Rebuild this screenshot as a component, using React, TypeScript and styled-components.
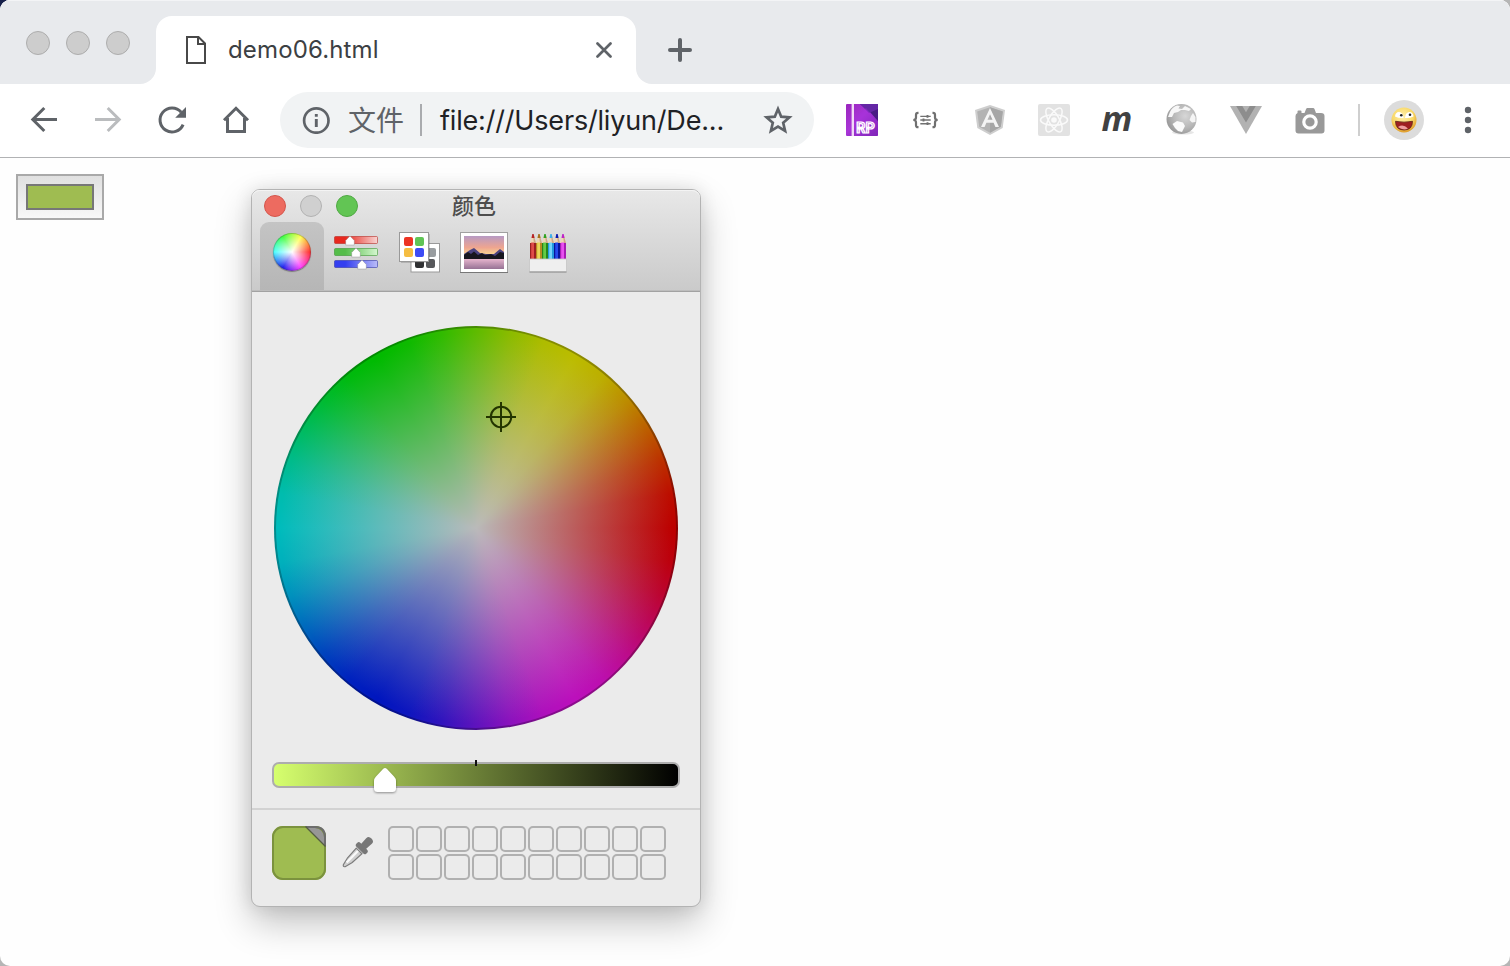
import React from "react";
import styled, { createGlobalStyle } from "styled-components";

const GlobalStyle = createGlobalStyle`
  * { box-sizing: border-box; }
  html, body { margin: 0; padding: 0; }
  body {
    width: 1510px;
    height: 966px;
    overflow: hidden;
    background: linear-gradient(90deg, #17204a 0 40px, #b5b5b5 40px) top / 100% 40px no-repeat #b5b5b5;
    font-family: Inter, "Noto Sans CJK SC", sans-serif;
  }
  svg { display: block; flex: none; }
`;

const BrowserWindow = styled.div`
  position: relative;
  display: flex;
  flex-direction: column;
  width: 1510px;
  height: 966px;
  border-radius: 10px;
  overflow: hidden;
  background: #fefefe;
`;

/* ---------- tab strip ---------- */

const TabStrip = styled.header`
  display: flex;
  height: 84px;
  flex: none;
  background: #fff;
`;

const StripLeft = styled.div`
  display: flex;
  align-items: center;
  gap: 16px;
  width: 156px;
  padding: 0 0 0 26px;
  background: #e8eaed;
  border-top: 1px solid #f3f4f6;
  border-bottom: 0;
  border-bottom-right-radius: 16px;
`;

const StripRight = styled.div`
  flex: 1;
  display: flex;
  align-items: center;
  padding: 14px 0 0 32px;
  background: #e8eaed;
  border-top: 1px solid #f3f4f6;
  border-bottom-left-radius: 16px;
`;

const TabHolder = styled.div`
  width: 480px;
  padding-top: 15px;
  background: #e8eaed;
  border-top: 1px solid #f3f4f6;
`;

const Tab = styled.div`
  display: flex;
  align-items: center;
  height: 68px;
  padding: 0 24px 0 29px;
  background: #fff;
  border-radius: 16px 16px 0 0;
`;

const TabTitle = styled.span`
  flex: 1;
  margin-left: 21px;
  font-size: 24px;
  line-height: 30px;
  letter-spacing: 0.15px;
  color: #3c4043;
`;

const Light = styled.span<{ $size: number; $fill: string; $edge: string }>`
  width: ${(p) => p.$size}px;
  height: ${(p) => p.$size}px;
  border-radius: 50%;
  background: ${(p) => p.$fill};
  border: 1px solid ${(p) => p.$edge};
`;

/* ---------- toolbar ---------- */

const Toolbar = styled.nav`
  display: flex;
  align-items: center;
  flex: none;
  height: 74px;
  padding: 0 0 1px 12px;
  background: #fff;
  border-bottom: 1px solid #b1b2b4;
`;

const Slot = styled.div`
  display: flex;
  align-items: center;
  justify-content: center;
  width: 64px;
  height: 64px;
  flex: none;
`;

const AddressBar = styled.div`
  display: flex;
  align-items: center;
  width: 534px;
  height: 56px;
  margin: 0 16px 0 12px;
  padding: 0 20px 0 22px;
  border-radius: 28px;
  background: #f1f3f4;
`;

const Scheme = styled.span`
  margin-left: 18px;
  padding-bottom: 2px;
  font: 28px/38px "Noto Sans CJK SC", sans-serif;
  color: #5f6368;
`;

const Divider = styled.span<{ $color: string }>`
  width: 2px;
  height: 32px;
  margin-left: 16px;
  background: ${(p) => p.$color};
`;

const Url = styled.span`
  flex: 1;
  margin-left: 18px;
  padding-top: 2px;
  font-size: 27px;
  line-height: 36px;
  letter-spacing: -0.18px;
  white-space: nowrap;
  color: #202124;
`;

const Avatar = styled.div`
  display: flex;
  align-items: center;
  justify-content: center;
  width: 40px;
  height: 40px;
  margin: 0 12px 0 24px;
  border-radius: 50%;
  background: #dcdcdc;
`;

const Markdown = styled.span`
  padding: 0 2px 5px 0;
  font: italic 700 34px/40px "Open Sans", sans-serif;
  color: #414141;
`;

/* ---------- page ---------- */

const Page = styled.main`
  flex: 1;
  padding: 16px;
`;

const ColorInput = styled.div`
  width: 88px;
  height: 46px;
  padding: 8px;
  border: 2px solid #a9a9a9;
  background: linear-gradient(#e0e0e0, #f8f8f8);
`;

const ColorValue = styled.div`
  height: 26px;
  border: 2px solid #777;
  background: #9fbc51;
`;

/* ---------- colour panel ---------- */

const Panel = styled.section`
  position: absolute;
  left: 251px;
  top: 189px;
  width: 450px;
  height: 718px;
  border: 1px solid #b3b3b3;
  border-radius: 9px;
  background: #ebebeb;
  background-clip: padding-box;
  box-shadow: 0 16px 36px rgba(0, 0, 0, 0.24), 0 0 18px rgba(0, 0, 0, 0.1);
`;

const PanelHeader = styled.div`
  height: 102px;
  border-radius: 8px 8px 0 0;
  border-bottom: 1px solid #a2a2a2;
  background: linear-gradient(#e8e8e8, #cacaca);
  box-shadow: inset 0 1px #f4f4f4, inset 0 -1px #bdbdbd;
`;

const PanelTitleBar = styled.div`
  display: grid;
  grid-template-columns: 188px 1fr 188px;
  height: 32px;
  align-items: center;
  padding-left: 12px;
`;

const PanelLights = styled.div`
  display: flex;
  gap: 14px;
`;

const PanelTitle = styled.h1`
  margin: 0;
  padding-bottom: 4px;
  font: 500 22px/28px "Noto Sans CJK SC", sans-serif;
  color: #4d4d4d;
`;

const ModeTabs = styled.div`
  display: flex;
  padding-left: 8px;
`;

const ModeTab = styled.div<{ $active?: boolean }>`
  display: flex;
  justify-content: center;
  width: 64px;
  height: 68px;
  padding-top: 6px;
  border-radius: 9px 9px 0 0;
  background: ${(p) => (p.$active ? "linear-gradient(#c4c4c4, #b6b6b6)" : "none")};
`;

const MiniWheel = styled.div`
  width: 38px;
  height: 38px;
  margin-top: 5px;
  border-radius: 50%;
  border: 1px solid rgba(70, 70, 70, 0.3);
  background:
    radial-gradient(circle closest-side, #fff 0%, rgba(255, 255, 255, 0) 100%),
    conic-gradient(from 90deg, #f22, #f3f, #11e, #4ff, #3f3, #ff4, #f22);
  background-origin: border-box;
  box-shadow: 0 1px 1px rgba(0, 0, 0, 0.35);
`;

const WheelArea = styled.div`
  padding: 34px 22px 0;
`;

/* Hues clockwise from the right-hand side, eased so that each one spreads around its own axis. */
const HUES = [
  [188, 0, 0],
  [188, 16, 188],
  [0, 22, 190],
  [0, 188, 188],
  [0, 186, 0],
  [188, 188, 0],
  [188, 0, 0],
];

const hueStops = HUES.slice(0, -1)
  .flatMap((from, i) =>
    [0, 10, 20, 30, 40, 50].map((deg) => {
      const t = deg / 60;
      const eased = t * t * (3 - 2 * t);
      const rgb = from.map((c, k) => Math.round(c + (HUES[i + 1][k] - c) * eased));
      return `rgb(${rgb.join(",")}) ${i * 60 + deg}deg`;
    })
  )
  .join(", ");

const Wheel = styled.div`
  position: relative;
  width: 404px;
  height: 404px;
  border-radius: 50%;
  border: 2px solid rgba(0, 0, 0, 0.25);
  background:
    radial-gradient(circle closest-side, #bababa 0%, rgba(186, 186, 186, 0) 97%),
    conic-gradient(from 90deg, ${hueStops}, rgb(188, 0, 0) 360deg);
  background-origin: border-box;
`;

const Crosshair = styled.svg`
  position: absolute;
  left: 210px;
  top: 74px;
`;

const Slider = styled.div`
  position: relative;
  width: 408px;
  height: 26px;
  margin: 32px 0 0 20px;
  border: 2px solid #adadad;
  border-radius: 7px;
  background: linear-gradient(90deg, #d6ff6e, #000);
`;

const Tick = styled.span`
  position: absolute;
  left: 201px;
  top: -4px;
  width: 2px;
  height: 6px;
  background: #111;
`;

const Thumb = styled.svg`
  position: absolute;
  left: 98px;
  top: 2px;
  filter: drop-shadow(0 1px 1px rgba(0, 0, 0, 0.4));
`;

const PanelFooter = styled.div`
  display: flex;
  margin-top: 20px;
  padding: 16px 20px 0;
  border-top: 2px solid #d2d2d2;
`;

const Dropper = styled.div`
  margin: 10px 14px 0 14px;
`;

const SavedColors = styled.div`
  display: grid;
  grid-template-columns: repeat(10, 26px);
  grid-auto-rows: 26px;
  gap: 2px;
`;

const SavedCell = styled.span`
  border: 2px solid #b0b0b0;
  border-radius: 5px;
`;

const GREY = "#5f6368";

const BackArrow = ({ color = GREY, flip = false }: { color?: string; flip?: boolean }) => (
  <svg width="30" height="30" viewBox="0 0 30 30" fill="none" stroke={color} strokeWidth="3" transform={flip ? "scale(-1,1)" : undefined}>
    <path d="M28 14.5H4M15.300 3L3.800 14.500L15.300 26" />
  </svg>
);

const Reload = () => (
  <svg width="32" height="32" viewBox="0 0 32 32">
    <path d="M27.1 20.6A12 12 0 1 1 25.2 8.2" fill="none" stroke={GREY} strokeWidth="3" />
    <path d="M30 3V13.7H19.2Z" fill={GREY} />
  </svg>
);

const Home = () => (
  <svg width="30" height="30" viewBox="0 0 30 30" fill="none" stroke={GREY} strokeWidth="3">
    <path d="M3 15.3L15 3.3L27 15.3" />
    <path d="M6.5 13V26.5H23.5V13" />
  </svg>
);

const Angular = () => (
  <svg width="32" height="32" viewBox="0 0 32 32">
    <path d="M16 1L31 6L28.7 24L16 31L3.3 24L1 6Z" fill="#cecece" />
    <path d="M16 3.3L28.8 7.5L26.8 22.8L16 28.8L5.2 22.8L3.2 7.5Z" fill="#b3b3b3" />
    <path d="M16 3.3L28.8 7.5L26.8 22.8L16 28.8Z" fill="#a6a6a6" />
    <path d="M16 4L7 23H10.6L12.4 18.7H19.6L21.4 23H25ZM16 10.2L18.5 15.8H13.5Z" fill="#f4f4f4" fillRule="evenodd" />
  </svg>
);

const ReactLogo = () => (
  <svg width="32" height="32" viewBox="0 0 32 32">
    <rect width="32" height="32" rx="2" fill="#e2e2e2" />
    <g fill="none" stroke="#fafafa" strokeWidth="1.5">
      <ellipse cx="16" cy="16" rx="13.5" ry="5.2" />
      <ellipse cx="16" cy="16" rx="13.5" ry="5.2" transform="rotate(60 16 16)" />
      <ellipse cx="16" cy="16" rx="13.5" ry="5.2" transform="rotate(120 16 16)" />
    </g>
    <circle cx="16" cy="16" r="2.8" fill="#fafafa" />
  </svg>
);

const AxureRP = () => (
  <svg width="32" height="32" viewBox="0 0 32 32">
    <defs>
      <linearGradient id="rp" x1="0" y1="0" x2="1" y2="1">
        <stop offset="0" stopColor="#9a25bd" />
        <stop offset="0.45" stopColor="#a935d8" />
        <stop offset="1" stopColor="#65209f" />
      </linearGradient>
    </defs>
    <rect width="32" height="32" rx="1" fill="url(#rp)" />
    <path d="M14 0H32V17L24 8Z" fill="#481c84" />
    <path d="M14 0L23 9L32 5V0Z" fill="#6427a5" />
    <path d="M9 13L20 4L32 18V32H9Z" fill="#a52fdc" opacity="0.4" />
    <rect x="5.600" width="2.400" height="32" fill="#f1d9f6" />
    <text x="10.2" y="28.5" fontFamily="Roboto" fontWeight="700" fontSize="14" textLength="18.5" lengthAdjust="spacingAndGlyphs" fill="#c475e2" stroke="#fff" strokeWidth="1.2">RP</text>
  </svg>
);

const BracesIcon = () => (
  <svg width="28" height="18" viewBox="0 0 28 18" fill="none" stroke="#707070" strokeWidth="2.200">
    <path d="M6.5 1.800H6Q4 1.800 4 3.800V6.500Q4 9 1.300 9Q4 9 4 11.500V14.200Q4 16.200 6 16.200H6.500" />
    <path d="M20.500 1.800H21Q23 1.800 23 3.800V6.500Q23 9 25.700 9Q23 9 23 11.500V14.200Q23 16.200 21 16.200H20.500" />
    <path d="M8.300 5.400H18.700M8.300 9H18.700M8.300 12.700H18.700" strokeWidth="1.4" />
    <path d="M15.500 4V6.8M11.500 7.6V10.4M15.500 11.3V14.1" strokeWidth="1.900" />
  </svg>
);

const Globe = () => (
  <svg width="34" height="34" viewBox="0 0 34 34">
    <defs>
      <radialGradient id="globe" cx="0.62" cy="0.4" r="0.65">
        <stop offset="0" stopColor="#d7d7d7" />
        <stop offset="0.6" stopColor="#b7b7b7" />
        <stop offset="1" stopColor="#999" />
      </radialGradient>
    </defs>
    <ellipse cx="18" cy="29.500" rx="11" ry="2" fill="#e6e6e6" />
    <circle cx="16.500" cy="16" r="15" fill="url(#globe)" />
    <path d="M5 9Q7 4 12 2.500L15 3L13.500 5.500L17 6L20 3L26 6L24 8L20 7L16 7L13 9L9 10L7 14L3 14Z" fill="#f7f7f7" />
    <path d="M7.500 21L12 18L18 19.500L20 23L17 29L13 28L10 25Z" fill="#fafafa" />
    <path d="M26 13L28 10L30.500 14V19L27 19.500L24.500 17Z" fill="#f5f5f5" />
  </svg>
);

const Vue = () => (
  <svg width="32" height="32" viewBox="0 0 32 32">
    <path d="M0 2H32L16 30Z" fill="#b2b2b2" />
    <path d="M6.2 2H12.3L16 8.3L19.7 2H25.8L16 18.500Z" fill="#8d8d8d" />
  </svg>
);

const Camera = () => (
  <svg width="32" height="32" viewBox="0 0 32 32">
    <path d="M3.500 9V7.500Q3.500 6.500 4.500 6.500H6.500Q7.500 6.500 7.500 7.500V9H10.500L12 5.200Q12.400 4 13.500 4H19Q20.200 4 20.600 5.200L22 9H27Q30.500 9 30.500 12V26.500Q30.500 29.500 27.500 29.500H4.500Q1.500 29.500 1.500 26.500V12Q1.500 10 3.500 9Z" fill="#999" />
    <circle cx="16" cy="18" r="6.200" fill="none" stroke="#fff" strokeWidth="3.200" />
  </svg>
);

const Smiley = () => (
  <svg width="26" height="26" viewBox="0 0 26 26">
    <defs>
      <radialGradient id="face" cx="0.45" cy="0.35" r="0.65">
        <stop offset="0" stopColor="#ffeeaa" />
        <stop offset="0.65" stopColor="#f8d867" />
        <stop offset="1" stopColor="#e09b28" />
      </radialGradient>
    </defs>
    <circle cx="13" cy="13" r="12.5" fill="url(#face)" />
    <path d="M4 9.500Q4.500 5 8 5Q12 5 12.500 11Q8 11.500 4 9.500Z" fill="#fff" />
    <path d="M14 11Q14.500 5 18.500 5Q22 5 22.500 9.500Q18 11.500 14 11Z" fill="#fff" />
    <circle cx="10.300" cy="8.300" r="1.300" fill="#222" />
    <circle cx="19" cy="7.800" r="1.300" fill="#222" />
    <path d="M4.500 14.3Q13 16 21.500 14.3Q21.500 23 13 23Q4.500 23 4.500 14.3Z" fill="#9e1f21" stroke="#5d2014" strokeWidth="0.8" />
    <path d="M7 20Q12 16.5 17 21.5Q12 24 7 20Z" fill="#ee9d9d" />
  </svg>
);

const SliderRows = [
  { y: 8, from: "#e8281e", to: "#f8d5d3", edge: "#b62b24", x: 16 },
  { y: 20, from: "#55bd4a", to: "#d5f7d0", edge: "#3c9734", x: 22 },
  { y: 32, from: "#343ff0", to: "#babcf8", edge: "#3339a9", x: 28 },
];

const SlidersIcon = () => (
  <svg width="44" height="48" viewBox="0 0 44 48">
    {SliderRows.map((r, i) => (
      <g key={i}>
        <defs>
          <linearGradient id={`row${i}`}>
            <stop offset="0.25" stopColor={r.from} />
            <stop offset="1" stopColor={r.to} />
          </linearGradient>
        </defs>
        <rect x="0.5" y={r.y + 0.5} width="43" height="7" rx="1" fill={`url(#row${i})`} stroke={r.edge} strokeOpacity="0.6" />
        <path
          d={`M${r.x} ${r.y}L${r.x + 4.3} ${r.y + 4.5}V${r.y + 9}H${r.x - 4.3}V${r.y + 4.5}Z`}
          fill="#fff" stroke="#777" strokeOpacity="0.45" strokeWidth="0.8"
        />
      </g>
    ))}
  </svg>
);

const PalettesIcon = () => (
  <svg width="42" height="48" viewBox="0 0 42 48">
    <rect x="12" y="15.500" width="28.500" height="28.500" fill="#fff" stroke="#999" />
    <rect x="28" y="20" width="9" height="9" rx="2" fill="#999da0" />
    <rect x="16" y="31" width="9" height="9" rx="2" fill="#303133" />
    <rect x="27" y="31" width="9" height="9" rx="2" fill="#57585b" />
    <rect x="2" y="6" width="29" height="29" fill="#555" opacity="0.25" />
    <rect x="0.5" y="4.500" width="29" height="29" fill="#fff" stroke="#999" />
    <rect x="5" y="9" width="9" height="9" rx="2" fill="#ec3323" />
    <rect x="16" y="9" width="9" height="9" rx="2" fill="#60c455" />
    <rect x="5" y="20" width="9" height="9" rx="2" fill="#f5bd42" />
    <rect x="16" y="20" width="9" height="9" rx="2" fill="#3d4bf5" />
  </svg>
);

const PictureIcon = () => (
  <svg width="48" height="48" viewBox="0 0 48 48">
    <defs>
      <linearGradient id="sky" x1="0" y1="0" x2="0" y2="1">
        <stop offset="0" stopColor="#b79ac4" />
        <stop offset="0.5" stopColor="#eea590" />
        <stop offset="0.85" stopColor="#fbdc91" />
      </linearGradient>
      <linearGradient id="lake" x1="0" y1="0" x2="0" y2="1">
        <stop offset="0" stopColor="#e6b5cd" />
        <stop offset="1" stopColor="#967294" />
      </linearGradient>
    </defs>
    <rect x="0.5" y="4.500" width="47" height="40" fill="#fff" stroke="#a0a0a0" />
    <path d="M0 44.500H48" stroke="#777" />
    <rect x="4" y="8" width="40" height="23" fill="url(#sky)" />
    <path d="M4 26L10 22L14 20L20 25L26 26L34 26L40 21L44 24V31H4Z" fill="#4a427f" />
    <path d="M4 27L8 24L11 26L14 23.500L18 27L22 25L25 27L31 26L35 28L40 24L44 25V31H4Z" fill="#17161e" />
    <rect x="4" y="31" width="40" height="10" fill="url(#lake)" />
  </svg>
);

const Pencils = [
  ["#df4c49", "#9c1f22", "#b52224"],
  ["#ecd65a", "#b88a21", "#a5701a"],
  ["#64cb45", "#26861b", "#2ea222"],
  ["#74d3fa", "#2298dd", "#3eaeea"],
  ["#2549ed", "#07149a", "#0717b1"],
  ["#e94ff0", "#a61cb4", "#bd23c9"],
];

const PencilsIcon = () => (
  <svg width="38" height="48" viewBox="0 0 38 48">
    {Pencils.map(([light, dark, tip], i) => (
      <g key={i} transform={`translate(${1 + i * 6} 0)`}>
        <path d="M0 15L2 8H4L6 15Z" fill="#efd6b6" />
        <path d="M3 8H4L6 15H4Z" fill="#cfa985" />
        <path d="M1.500 10L2.300 6H3.700L4.500 10Z" fill={tip} />
        <rect y="15" width="6" height="16" fill={dark} />
        <rect x="1.200" y="14.500" width="2.800" height="16.500" fill={light} />
      </g>
    ))}
    <path d="M0.500 31H37.500V44H0.500Z" fill="#efefef" stroke="#c5c5c5" strokeWidth="0.8" />
    <path d="M0.500 44H37.500" stroke="#888" strokeWidth="1.200" />
  </svg>
);

const CurrentColor = () => (
  <svg width="54" height="54" viewBox="0 0 54 54">
    <defs>
      <clipPath id="swatch"><rect width="54" height="54" rx="11" /></clipPath>
    </defs>
    <g clipPath="url(#swatch)">
      <rect width="54" height="54" fill="#9fbc51" />
      <path d="M33 0H54V21Z" fill="#979797" />
    </g>
    <rect x="1" y="1" width="52" height="52" rx="10" fill="none" stroke="#7b923e" strokeWidth="2" />
    <path d="M34 1H43Q53 1 53 11V20" fill="none" stroke="#6d6d6d" strokeWidth="2" />
    <path d="M33.500 0.500L53.500 20.500" stroke="#555d42" strokeWidth="1.200" />
  </svg>
);

const DropperIcon = () => (
  <svg width="34" height="34" viewBox="0 0 34 34">
    <g transform="rotate(45 17 17)">
      <path d="M13 14H21L20.300 27L18.300 35Q17 37 15.700 35L13.700 27Z" fill="#d0d0d0" stroke="#7c7c7c" strokeWidth="1.200" />
      <path d="M16.300 15V31" stroke="#fafafa" strokeWidth="2.200" />
      <path d="M13 0Q13 -3.500 17 -3.500Q21 -3.500 21 0L20.500 7.500H21.500Q24 7.500 24 9.500V11Q24 13 21.500 13H12.500Q10 13 10 11V9.500Q10 7.500 12.500 7.500H13.500Z" fill="#777" />
    </g>
  </svg>
);

export default function App() {
  return (
    <BrowserWindow>
      <GlobalStyle />
      <TabStrip>
        <StripLeft>
          {[0, 1, 2].map((i) => (
            <Light key={i} $size={24} $fill="#cdcdcd" $edge="#adadad" />
          ))}
        </StripLeft>
        <TabHolder>
          <Tab>
            <svg width="22" height="30" viewBox="0 0 22 30" fill="none" stroke="#484848" strokeWidth="2">
              <path d="M2 2H13.500L20 8.500V28H2Z" />
              <path d="M13 2V9H20" />
            </svg>
            <TabTitle>demo06.html</TabTitle>
            <svg width="16" height="16" viewBox="0 0 16 16" stroke={GREY} strokeWidth="2.700" strokeLinecap="round">
              <path d="M1.500 1.500L14.500 14.500M14.500 1.500L1.500 14.500" />
            </svg>
          </Tab>
        </TabHolder>
        <StripRight>
          <svg width="24" height="24" viewBox="0 0 24 24" stroke={GREY} strokeWidth="4" strokeLinecap="round">
            <path d="M12 2V22M2 12H22" />
          </svg>
        </StripRight>
      </TabStrip>

      <Toolbar>
        <Slot><BackArrow /></Slot>
        <Slot><BackArrow color="#babcbe" flip /></Slot>
        <Slot><Reload /></Slot>
        <Slot><Home /></Slot>
        <AddressBar>
          <svg width="28" height="28" viewBox="0 0 28 28">
            <circle cx="14.300" cy="14.500" r="12.200" fill="none" stroke={GREY} strokeWidth="2.700" />
            <path d="M14.300 8V10.800M14.300 13V21" stroke={GREY} strokeWidth="2.900" />
          </svg>
          <Scheme>文件</Scheme>
          <Divider $color="#a9abae" />
          <Url>file:///Users/liyun/De...</Url>
          <svg width="32" height="32" viewBox="0 0 32 32" fill="none" stroke={GREY} strokeWidth="2.700">
            <path d="M16 5L19.200 12.700L27.400 13.400L21.200 18.800L23.100 26.900L16 22.600L8.900 26.900L10.800 18.800L4.600 13.400L12.800 12.700Z" />
          </svg>
        </AddressBar>
        <Slot><AxureRP /></Slot>
        <Slot><BracesIcon /></Slot>
        <Slot><Angular /></Slot>
        <Slot><ReactLogo /></Slot>
        <Slot><Markdown>m</Markdown></Slot>
        <Slot><Globe /></Slot>
        <Slot><Vue /></Slot>
        <Slot><Camera /></Slot>
        <Divider $color="#cfcfcf" />
        <Avatar><Smiley /></Avatar>
        <Slot>
          <svg width="8" height="28" viewBox="0 0 8 28" fill={GREY}>
            <circle cx="4" cy="4" r="3.200" />
            <circle cx="4" cy="14" r="3.200" />
            <circle cx="4" cy="24" r="3.200" />
          </svg>
        </Slot>
      </Toolbar>

      <Page>
        <ColorInput><ColorValue /></ColorInput>
      </Page>

      <Panel>
        <PanelHeader>
          <PanelTitleBar>
            <PanelLights>
              <Light $size={22} $fill="#ed6b60" $edge="#d4554b" />
              <Light $size={22} $fill="#d0d0d0" $edge="#b2b2b2" />
              <Light $size={22} $fill="#62c554" $edge="#4fa943" />
            </PanelLights>
            <PanelTitle>颜色</PanelTitle>
          </PanelTitleBar>
          <ModeTabs>
            <ModeTab $active><MiniWheel /></ModeTab>
            <ModeTab><SlidersIcon /></ModeTab>
            <ModeTab><PalettesIcon /></ModeTab>
            <ModeTab><PictureIcon /></ModeTab>
            <ModeTab><PencilsIcon /></ModeTab>
          </ModeTabs>
        </PanelHeader>
        <WheelArea>
          <Wheel>
            <Crosshair width="30" height="30" viewBox="0 0 30 30" fill="none" stroke="#233400" strokeWidth="2">
              <circle cx="15" cy="15" r="10.200" />
              <path d="M15 0V30M0 15H30" />
            </Crosshair>
          </Wheel>
        </WheelArea>
        <Slider>
          <Tick />
          <Thumb width="26" height="28" viewBox="0 0 26 28">
            <path d="M13 2Q14 2 15 3L22 10.500Q24 12.500 24 15V22.500Q24 26 20.500 26H5.500Q2 26 2 22.500V15Q2 12.500 4 10.500L11 3Q12 2 13 2Z" fill="#fff" />
          </Thumb>
        </Slider>
        <PanelFooter>
          <CurrentColor />
          <Dropper><DropperIcon /></Dropper>
          <SavedColors>
            {Array.from({ length: 20 }, (_, i) => <SavedCell key={i} />)}
          </SavedColors>
        </PanelFooter>
      </Panel>
    </BrowserWindow>
  );
}
